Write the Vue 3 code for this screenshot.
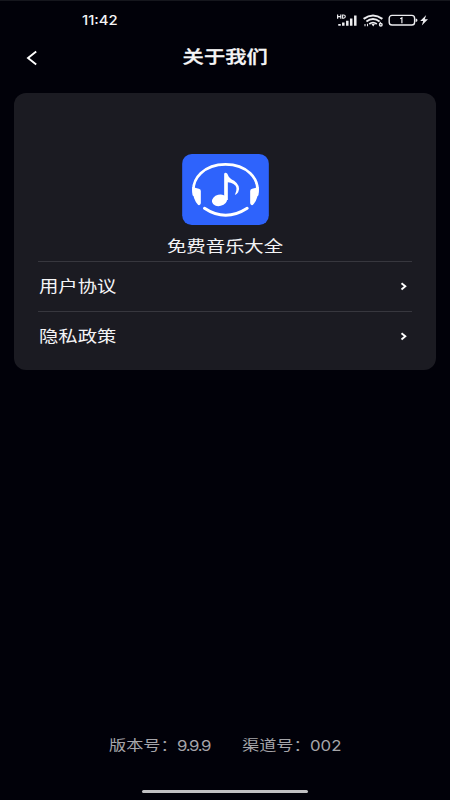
<script setup>
const rows = ['用户协议', '隐私政策']
</script>

<template>
  <div class="screen">
    <header class="status">
      <span class="time">11:42</span>
      <svg class="indicators" viewBox="0 0 94 16" width="94" height="16">
        <g class="line">
          <path d="M1.6 2.5v4.2M4.8 2.5v4.2M1.6 4.6h3.2" stroke-width="1.2" />
          <path d="M6.6 3v3.2h1q1.7 0 1.7-1.6t-1.7-1.6z" stroke-width="1.1" />
          <path d="M3.5 13.8v-1.9M7.3 13.8v-3.3M11.3 13.8V8.8M15.2 13.8V6.6M19.3 13.8V3.4" stroke-width="2.5" />
          <path d="M27.6 6.9q9.4-7 18.8 0" stroke-width="2" />
          <path d="M30.4 9.5q6.6-4.9 13.2 0" stroke-width="1.9" />
          <path d="M33.2 12q3.8-2.8 7.6 0" stroke-width="1.8" />
          <path d="M29 14.2v-2.2M31.5 11.8v2.4" stroke-width="1.1" />
          <circle cx="44.8" cy="12.7" r="1.3" stroke-width="1.4" />
          <path d="M43.6 12.3l1-2.4" stroke-width="1.1" />
          <rect x="53.2" y="3.4" width="25.4" height="9.6" rx="2.8" stroke-width="1.4" />
          <path d="M64.2 6.7l1.7-1v5.6" stroke-width="1.2" />
        </g>
        <path class="solid" d="M35.5 12h3.4l-1.7 2.6zM79.6 6.5q1.9 0 1.9 1.7t-1.9 1.7zM90.2 2.9l-6 6h3l-1.4 4.6 6.2-6.2h-3.2z" />
      </svg>
    </header>

    <nav class="bar">
      <svg class="back" viewBox="0 0 12 16" width="12" height="16">
        <path d="M10.2 1.5L2 8l8.2 6.5" />
      </svg>
      <h1 class="title"><span>关于我们</span></h1>
    </nav>

    <main class="card">
      <div class="brand">
        <svg viewBox="0 0 260 213" width="87" height="71">
          <rect width="260" height="213" rx="29" fill="#2e63fc" />
          <g fill="none" stroke="#fff" stroke-linecap="round">
            <path d="M35 122C26 72 68 31 130 31S234 72 225 122" stroke-width="8" />
            <path d="M67 163Q130 205 195 163" stroke-width="9" />
          </g>
          <g fill="#fff">
            <path d="M30 99L50 104Q56 105 56 111V148Q55 155 48 153Q32 137 30 99Z" />
            <path d="M230 99L210 104Q204 105 204 111V148Q205 155 212 153Q228 137 230 99Z" />
            <ellipse cx="112" cy="139" rx="23" ry="17" transform="rotate(-13 112 139)" />
            <path d="M126 60Q126 56 131 56Q136 57 137 62Q140 72 156 80Q178 96 168 115Q164 121 158 123Q170 98 154 90Q146 85 137 85V138H126Z" />
          </g>
        </svg>
        <span class="name">免费音乐大全</span>
      </div>
      <ul class="list">
        <li v-for="row in rows" :key="row" class="row">
          <span class="label">{{ row }}</span>
          <svg class="chevron" viewBox="0 0 8 10" width="8" height="10">
            <path d="M1.5 2.2L5.3 5.3l-3.8 3.1" />
          </svg>
        </li>
      </ul>
    </main>

    <footer class="meta">
      <p class="item"><span class="key">版本号：</span><span class="num version">9.9.9</span></p>
      <p class="item"><span class="key">渠道号：</span><span class="num">002</span></p>
    </footer>
    <div class="home"></div>
  </div>
</template>

<style>
body {
  margin: 0;
  background: #010109;
}
</style>

<style scoped>
.screen {
  box-sizing: border-box;
  width: 450px;
  height: 800px;
  display: flex;
  flex-direction: column;
  overflow: hidden;
  background: #010109;
  color: #f4f4f6;
  font-family: Inter, "Noto Sans CJK SC", sans-serif;
  border-top: 1px solid #15161d;
}
.status {
  height: 38px;
  display: flex;
  justify-content: space-between;
  align-items: center;
  padding: 0 20px 0 82px;
}
.time {
  font-size: 13.4px;
  font-weight: 500;
  line-height: 16px;
  transform: scaleX(1.11);
  transform-origin: left;
}
.indicators .line {
  fill: none;
  stroke: #ececef;
}
.indicators .solid {
  fill: #ececef;
}
.bar {
  height: 38px;
  display: grid;
  grid-template-columns: 52px 1fr 52px;
  align-items: center;
}
.back {
  margin-left: 26px;
}
.back path,
.chevron path {
  fill: none;
  stroke: #fff;
  stroke-width: 1.9;
}
.title {
  margin: -2px 0 0;
  text-align: center;
  font-size: 17.6px;
  line-height: 26px;
  font-weight: 500;
}
.title span {
  display: inline-block;
  transform: scaleX(1.21);
  -webkit-text-stroke: 0.3px #fff;
}
.card {
  box-sizing: border-box;
  height: 277px;
  margin: 16px 14px 0;
  padding: 61px 24px 0;
  border-radius: 12px;
  background: #1b1b22;
}
.brand {
  height: 107px;
  display: flex;
  flex-direction: column;
  align-items: center;
}
.name {
  margin-top: 9px;
  font-size: 16px;
  line-height: 24px;
  transform: scaleX(1.21);
}
.list {
  list-style: none;
  margin: 0;
  padding: 0;
}
.row {
  box-sizing: border-box;
  height: 49.5px;
  display: flex;
  justify-content: space-between;
  align-items: center;
  border-top: 1.5px solid #37373e;
  padding: 0 4px 0 1px;
}
.label {
  font-size: 16px;
  line-height: 24px;
  transform: scaleX(1.21);
  transform-origin: left;
}
.meta {
  margin-top: 363px;
  height: 24px;
  display: flex;
  padding-left: 109px;
  color: #a5a5a9;
}
.item {
  display: flex;
  width: 133px;
  margin: 0;
  line-height: 24px;
}
.key {
  width: 68px;
  white-space: nowrap;
  font-size: 14.2px;
  transform: scaleX(1.21);
  transform-origin: left;
}
.num {
  font-size: 15px;
  line-height: 25px;
  transform: scaleX(1.12);
  transform-origin: left;
}
.version {
  letter-spacing: -1.2px;
}
.home {
  width: 166px;
  height: 3px;
  margin: 33px 0 0 142px;
  border-radius: 2px;
  background: #c0c0c2;
}
</style>
